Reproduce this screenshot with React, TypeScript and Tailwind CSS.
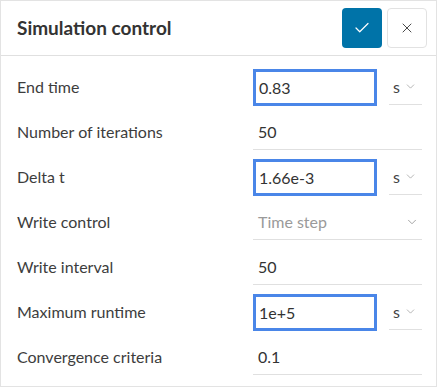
import { Check, X, ChevronDown } from 'lucide-react';

type Row = {
  label: string;
  value: string;
  focused?: boolean;
  unit?: string;
  select?: boolean;
};

const rows: Row[] = [
  { label: 'End time', value: '0.83', focused: true, unit: 's' },
  { label: 'Number of iterations', value: '50' },
  { label: 'Delta t', value: '1.66e-3', focused: true, unit: 's' },
  { label: 'Write control', value: 'Time step', select: true },
  { label: 'Write interval', value: '50' },
  { label: 'Maximum runtime', value: '1e+5', focused: true, unit: 's' },
  { label: 'Convergence criteria', value: '0.1' },
];

const Field = ({ row }: { row: Row }) => {
  if (row.unit) {
    return (
      <div className="flex items-start h-[36px] w-[169px]">
        <div className="w-[124px] h-[37px] border-[3px] border-[#4a86e8] flex items-center pl-[3px] text-[16px] text-[#333]">
          {row.value}
        </div>
        <div className="ml-[12px] w-[33px] h-[36px] border-b border-[#e0e0e0] flex items-center pl-[4px] gap-[4px] text-[16px] text-[#444]">
          <span>{row.unit}</span>
          <ChevronDown className="w-[13px] h-[13px] text-[#999]" strokeWidth={1.3} />
        </div>
      </div>
    );
  }
  return (
    <div className="w-[169px] h-[36px] border-b border-[#e0e0e0] flex items-center justify-between pl-[5px] pr-[3px] text-[16px]">
      <span className={row.select ? 'text-[#9a9a9a]' : 'text-[#333]'}>{row.value}</span>
      {row.select && <ChevronDown className="w-[14px] h-[14px] text-[#888]" strokeWidth={1.3} />}
    </div>
  );
};

export default function App() {
  return (
    <div
      className="w-[437px] h-[387px] border border-[#e3e3e3] bg-white flex flex-col"
      style={{ fontFamily: 'Lato, "Open Sans", sans-serif' }}
    >
      <div className="h-[55px] border-b border-[#e0e0e0] flex items-center justify-between pl-[16px] pr-[9px]">
        <h1 className="text-[19px] font-bold text-[#333]">Simulation control</h1>
        <div className="flex items-center gap-[5px]">
          <button className="w-[40px] h-[40px] rounded-[4px] bg-[#0073a8] flex items-center justify-center">
            <Check className="w-[18px] h-[18px] text-white" strokeWidth={1.6} />
          </button>
          <button className="w-[40px] h-[40px] rounded-[4px] border border-[#e2e2e2] bg-white flex items-center justify-center">
            <X className="w-[16px] h-[16px] text-[#4a4a4a]" strokeWidth={1.5} />
          </button>
        </div>
      </div>
      <div className="flex flex-col gap-[9px] pt-[13px] pl-[16px] pr-[14px]">
        {rows.map((row) => (
          <div key={row.label} className="flex items-center justify-between h-[36px]">
            <span className="text-[16px] text-[#3d3d3d]">{row.label}</span>
            <Field row={row} />
          </div>
        ))}
      </div>
    </div>
  );
}
